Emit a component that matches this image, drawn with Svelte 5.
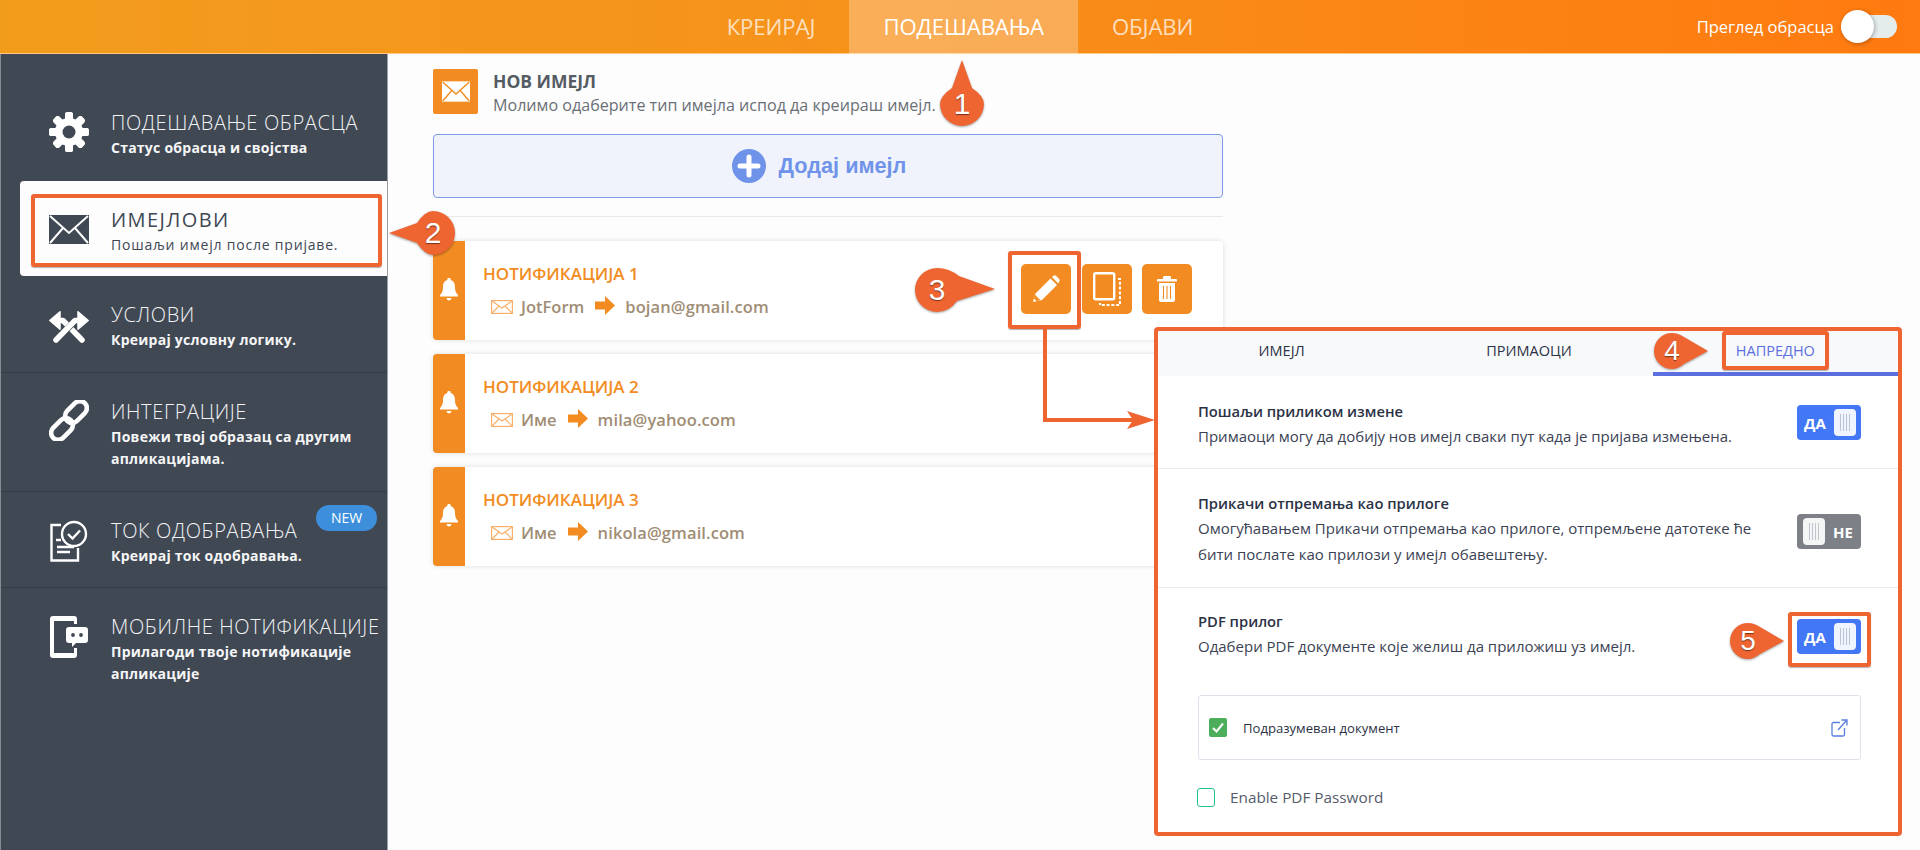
<script>
	const tabs = [
		{ label: 'КРЕИРАЈ' },
		{ label: 'ПОДЕШАВАЊА', active: true },
		{ label: 'ОБЈАВИ' }
	];

	const nav = [
		{ icon: 'gear', title: 'ПОДЕШАВАЊЕ ОБРАСЦА', sub: ['Статус обрасца и својства'], cls: 'first' },
		{ icon: 'mail', title: 'ИМЕЈЛОВИ', sub: ['Пошаљи имејл после пријаве.'], cls: 'active' },
		{ icon: 'cross', title: 'УСЛОВИ', sub: ['Креирај условну логику.'] },
		{ icon: 'link', title: 'ИНТЕГРАЦИЈЕ', sub: ['Повежи твој образац са другим', 'апликацијама.'] },
		{ icon: 'flow', title: 'ТОК ОДОБРАВАЊА', sub: ['Креирај ток одобравања.'], badge: 'NEW', cls: 'flow-item' },
		{ icon: 'phone', title: 'МОБИЛНЕ НОТИФИКАЦИЈЕ', sub: ['Прилагоди твоје нотификације', 'апликације'] }
	];

	const cards = [
		{ title: 'НОТИФИКАЦИЈА 1', from: 'JotForm', to: 'bojan@gmail.com', actions: true },
		{ title: 'НОТИФИКАЦИЈА 2', from: 'Име', to: 'mila@yahoo.com' },
		{ title: 'НОТИФИКАЦИЈА 3', from: 'Име', to: 'nikola@gmail.com' }
	];

	const gearTeeth = [0, 45, 90, 135, 180, 225, 270, 315];
</script>

{#snippet envelope(cls)}
	<svg class={cls} viewBox="0 0 40 29">
		<rect width="40" height="29" fill="currentColor" />
		<path d="M1 1 L20 18 L39 1 M1 28 L14 13 M39 28 L26 13" fill="none" stroke="var(--cut)" stroke-width="2" />
	</svg>
{/snippet}

{#snippet navIcon(name)}
	{#if name === 'gear'}
		<svg class="nav-icon gear" viewBox="0 0 40 40">
			{#each gearTeeth as a}
				<rect x="16" y="0" width="8" height="40" rx="2.5" fill="#fff" transform="rotate({a} 20 20)" />
			{/each}
			<circle cx="20" cy="20" r="14" fill="#fff" />
			<circle cx="20" cy="20" r="6.500" fill="#404854" />
		</svg>
	{:else if name === 'mail'}
		<span class="nav-icon mail">{@render envelope('mail-svg')}</span>
	{:else if name === 'cross'}
		<svg class="nav-icon cross" viewBox="0 0 40 33">
			<path d="M33 29 L14 9.500 H9" fill="none" stroke="#fff" stroke-width="5.500" stroke-linecap="round" stroke-linejoin="round" />
			<path d="M0.800 9.500 L11 0.800 V18.200 Z" fill="#fff" stroke="#fff" stroke-width="1.500" stroke-linejoin="round" />
			<path d="M12 24 L25 11" fill="none" stroke="#404854" stroke-width="6.500" />
			<path d="M7 29 L26 9.500 H31" fill="none" stroke="#fff" stroke-width="5.500" stroke-linecap="round" stroke-linejoin="round" />
			<path d="M39.200 9.500 L29 0.800 V18.200 Z" fill="#fff" stroke="#fff" stroke-width="1.500" stroke-linejoin="round" />
		</svg>
	{:else if name === 'link'}
		<svg class="nav-icon link" viewBox="0 0 40 40">
			<g fill="none" stroke="#fff" stroke-width="4.600">
				<rect x="20" y="-1" width="14" height="25" rx="7" transform="rotate(45 27 11.500)" />
				<rect x="6" y="16" width="14" height="25" rx="7" transform="rotate(45 13 28.500)" />
			</g>
		</svg>
	{:else if name === 'flow'}
		<svg class="nav-icon flow" viewBox="0 0 38 42">
			<path d="M11 5 H1.500 V40.500 H28 V28" fill="none" stroke="#fff" stroke-width="2.400" />
			<path d="M6 20 H11 M7 27 H24 M7 32 H20" stroke="#fff" stroke-width="2.400" />
			<circle cx="24" cy="14" r="12" fill="#404854" stroke="#fff" stroke-width="2.400" />
			<path d="M18 14 L22.500 18.500 L30 10.500" fill="none" stroke="#fff" stroke-width="2.400" />
		</svg>
	{:else if name === 'phone'}
		<svg class="nav-icon phone" viewBox="0 0 38 42">
			<path d="M3 0 H24 Q27 0 27 3 V8 H24 V5 H4 V37 H24 V32 H27 V39 Q27 42 24 42 H3 Q0 42 0 39 V3 Q0 0 3 0 Z" fill="#fff" />
			<path d="M19 11 H35 Q38 11 38 14 V24 Q38 27 35 27 H26 L22 31 V27 H19 Q16 27 16 24 V14 Q16 11 19 11 Z" fill="#fff" />
			<circle cx="23" cy="19" r="1.900" fill="#404854" />
			<circle cx="31" cy="19" r="1.900" fill="#404854" />
		</svg>
	{/if}
{/snippet}

{#snippet toggle(on, label)}
	<div class="toggle" class:on>
		{#if on}<b>{label}</b>{/if}
		<span class="knob"><i></i><i></i><i></i><i></i></span>
		{#if !on}<b>{label}</b>{/if}
	</div>
{/snippet}

<div class="page">
	<header class="topbar">
		<nav class="tabs">
			{#each tabs as t}
				<a class="tab" class:active={t.active} href="#top">{t.label}</a>
			{/each}
		</nav>
		<div class="preview">
			<span>Преглед обрасца</span>
			<div class="switch"><span class="switch-knob"></span></div>
		</div>
	</header>

	<div class="layout">
		<aside class="sidebar">
			{#each nav as item}
				<div class="item {item.cls ?? ''}">
					{@render navIcon(item.icon)}
					<div class="item-text">
						<div class="item-title">{item.title}</div>
						{#each item.sub as line}
							<div class="item-sub">{line}</div>
						{/each}
					</div>
					{#if item.badge}<span class="new">{item.badge}</span>{/if}
				</div>
			{/each}
		</aside>

		<main class="content">
			<div class="head">
				<div class="head-icon">{@render envelope('head-svg')}</div>
				<div>
					<div class="head-title">НОВ ИМЕЈЛ</div>
					<div class="head-sub">Молимо одаберите тип имејла испод да креираш имејл.</div>
				</div>
			</div>

			<button class="add">
				<svg class="plus" viewBox="0 0 34 34">
					<circle cx="17" cy="17" r="17" fill="#6f93e8" />
					<path d="M17 8 V26 M8 17 H26" stroke="#fff" stroke-width="5" stroke-linecap="round" />
				</svg>
				Додај имејл
			</button>

			<hr />

			{#each cards as c}
				<div class="card">
					<div class="strip">
						<svg viewBox="0 0 18 23" class="bell">
							<path d="M9 0 a1.600 1.600 0 0 1 1.600 2 C14 3 15 6 15 9 C15 13 16 15 18 17 V18.500 H0 V17 C2 15 3 13 3 9 C3 6 4 3 7.400 2 A1.600 1.600 0 0 1 9 0 Z M6.500 20 H11.500 A2.500 2.500 0 0 1 6.500 20 Z" fill="#fff" />
						</svg>
					</div>
					<div class="card-body">
						<div class="card-title">{c.title}</div>
						<div class="card-line">
							<svg class="mini" viewBox="0 0 22 14">
								<rect x=".6" y=".6" width="20.800" height="12.800" fill="#fff" stroke="#f9b06a" stroke-width="1.200" />
								<path d="M1 1 L11 8 L21 1 M1 13 L8 6 M21 13 L14 6" fill="none" stroke="#f9b06a" stroke-width="1.200" />
							</svg>
							<span>{c.from}</span>
							<svg class="arrow" viewBox="0 0 20 19">
								<path d="M0 5.500 H10 V0 L20 9.500 L10 19 V13.500 H0 Z" fill="#f28c22" />
							</svg>
							<span class="to">{c.to}</span>
						</div>
					</div>
					{#if c.actions}
						<div class="actions">
							<button class="act" aria-label="edit">
								<svg viewBox="0 0 28 28" width="28" height="28">
									<path d="M1 27 L3.500 18.500 L18.500 3.500 L25 10 L10 25 Z" fill="#fff" />
									<path d="M20 2 L22 0.500 Q23 0 24 .8 L27.200 4 Q28 5 27.500 6 L26.200 8.500 Z" fill="#fff" />
									<path d="M1 27 L3 20 L8 25 Z" fill="#f28c22" stroke="#f28c22" stroke-width=".4" />
									<path d="M1 27 L2 23.500 L4.500 26 Z" fill="#fff" />
								</svg>
							</button>
							<button class="act" aria-label="copy">
								<svg viewBox="0 0 28 34" width="28" height="34">
									<rect x="1.200" y="1.200" width="20" height="26" rx="1.500" fill="none" stroke="#fff" stroke-width="2.400" />
									<path d="M25 7 H27 V33 H7 V31" fill="none" stroke="#fff" stroke-width="2.200" stroke-dasharray="3 1.800" />
								</svg>
							</button>
							<button class="act" aria-label="delete">
								<svg viewBox="0 0 20 26" width="20" height="26">
									<path d="M7 0 H13 Q14 0 14 1.500 V3 H19 Q20 3 20 4 V5.500 H0 V4 Q0 3 1 3 H6 V1.500 Q6 0 7 0 Z" fill="#fff" />
									<path d="M2 7 H18 V24 Q18 26 16 26 H4 Q2 26 2 24 Z" fill="#fff" />
									<path d="M6.500 10 V23 M10 10 V23 M13.500 10 V23" stroke="#f28c22" stroke-width="1.100" />
								</svg>
							</button>
						</div>
					{/if}
				</div>
			{/each}
		</main>
	</div>

	<!-- callout panel that sits over the page -->
	<section class="panel">
		<div class="panel-tabs">
			<div class="ptab">ИМЕЈЛ</div>
			<div class="ptab">ПРИМАОЦИ</div>
			<div class="ptab current">НАПРЕДНО</div>
		</div>

		<div class="row row-one">
			<div>
				<h4>Пошаљи приликом измене</h4>
				<p>Примаоци могу да добију нов имејл сваки пут када је пријава измењена.</p>
			</div>
			{@render toggle(true, 'ДА')}
		</div>
		<div class="row row-two">
			<div>
				<h4>Прикачи отпремања као прилоге</h4>
				<p>Омогућавањем Прикачи отпремања као прилоге, отпремљене датотеке ће<br />бити послате као прилози у имејл обавештењу.</p>
			</div>
			{@render toggle(false, 'НЕ')}
		</div>
		<div class="row row-three">
			<div>
				<h4>PDF прилог</h4>
				<p>Одабери PDF документе које желиш да приложиш уз имејл.</p>
			</div>
			{@render toggle(true, 'ДА')}
		</div>

		<div class="doc">
			<span class="check">
				<svg viewBox="0 0 18 19" width="18" height="19"><path d="M4 10 L7.500 13.500 L14 5.500" fill="none" stroke="#fff" stroke-width="2" /></svg>
			</span>
			<span class="doc-label">Подразумеван документ</span>
			<svg class="ext" viewBox="0 0 17 18" width="17" height="18">
				<path d="M9 3.500 H2.500 Q1 3.500 1 5 V15.500 Q1 17 2.500 17 H12 Q13.500 17 13.500 15.500 V9 M7 11 L15.500 1.500 M10.500 1 H16 V6.500" fill="none" stroke="#5a7de0" stroke-width="1.300" />
			</svg>
		</div>

		<div class="pass">
			<span class="empty"></span>
			<span>Enable PDF Password</span>
		</div>
	</section>

	<!-- tutorial highlights -->
	<div class="mark m-nav"></div>
	<div class="mark m-edit"></div>
	<div class="mark m-tab"></div>
	<div class="mark m-toggle"></div>

	<svg class="wire" viewBox="0 0 120 100" width="120" height="100">
		<path d="M2 0 V92 H96" fill="none" stroke="#ee6532" stroke-width="4" />
		<path d="M84 83 L112 92 L84 101 L90 92 Z" fill="#ee6532" />
	</svg>

	<div class="pin p1">
		<svg viewBox="0 0 44 66" width="44" height="66"><path d="M22 0 L32 28 Q44 36 44 44 A22 22 0 0 1 0 44 Q0 36 12 28 Z" /></svg>
		<span>1</span>
	</div>
	<div class="pin p2">
		<svg viewBox="0 0 66 44" width="66" height="44"><path d="M0 22 L28 12 Q36 0 44 0 A22 22 0 0 1 44 44 Q36 44 28 32 Z" /></svg>
		<span>2</span>
	</div>
	<div class="pin p3">
		<svg viewBox="0 0 80 44" width="80" height="44"><path d="M80 21 L44 8 Q34 0 22 0 A22 22 0 0 0 22 44 Q34 44 42 33 Z" /></svg>
		<span>3</span>
	</div>
	<div class="pin p4">
		<svg viewBox="0 0 54 36" width="54" height="36"><path d="M54 18 L30 4 Q24 0 18 0 A18 18 0 0 0 18 36 Q24 36 30 31 Z" /></svg>
		<span>4</span>
	</div>
	<div class="pin p5">
		<svg viewBox="0 0 54 36" width="54" height="36"><path d="M54 18 L30 4 Q24 0 18 0 A18 18 0 0 0 18 36 Q24 36 30 31 Z" /></svg>
		<span>5</span>
	</div>
</div>

<style>
	:global(body) {
		margin: 0;
		background: #fdfdfd;
		overflow: hidden;
	}

	.page {
		position: relative;
		width: 1920px;
		height: 850px;
		overflow: hidden;
		font-family: 'Open Sans', sans-serif;
		display: flex;
		flex-direction: column;
	}

	.topbar {
		position: relative;
		height: 54px;
		flex: none;
		background: linear-gradient(90deg, #f29c1c 0%, #f6931b 40%, #ff7a10 100%);
		display: flex;
		justify-content: center;
		box-shadow: inset 0 -1px 0 #ffc98a;
	}

	.tabs {
		display: flex;
	}

	.tab {
		padding: 0 34px;
		line-height: 54px;
		font-size: 22.200px;
		letter-spacing: -0.1px;
		color: rgba(255, 255, 255, 0.72);
		text-decoration: none;
	}

	.tab.active {
		background: rgba(255, 255, 255, 0.27);
		color: #fff;
	}

	.preview {
		position: absolute;
		right: 23px;
		top: 10px;
		display: flex;
		align-items: center;
		gap: 7px;
		height: 33px;
		color: #fff;
		font-size: 16.500px;
	}

	.switch {
		position: relative;
		width: 56px;
		height: 23px;
		border-radius: 12px;
		background: #e5ecec;
	}

	.switch-knob {
		position: absolute;
		left: 0;
		top: -5px;
		width: 33px;
		height: 33px;
		border-radius: 50%;
		background: #fff;
		box-shadow: 1px 1px 4px rgba(0, 0, 0, 0.3);
	}

	.layout {
		flex: 1;
		display: flex;
		min-height: 0;
	}

	.sidebar {
		width: 388px;
		flex: none;
		background: #404854;
		border-left: 1px solid #868b93;
		border-right: 1px solid #9a9ea5;
		box-sizing: border-box;
	}

	.item {
		position: relative;
		display: flex;
		padding: 25px 0 21px 48px;
		gap: 22px;
		color: #fff;
		border-bottom: 1px solid #343b46;
	}

	.item:last-child {
		border-bottom: 0;
	}

	.item.flow-item {
		padding-bottom: 20px;
	}

	.item.first {
		height: 127px;
		box-sizing: border-box;
		padding-top: 55px;
		border-bottom: 0;
	}

	.item.active {
		background: #fdfdfd;
		color: #404854;
		margin-left: 19px;
		padding-left: 29px;
		height: 95px;
		box-sizing: border-box;
		border-radius: 4px 0 0 4px;
		border-bottom: 0;
	}

	.nav-icon {
		width: 40px;
		flex: none;
		display: block;
	}

	.gear {
		height: 40px;
		margin-top: 3px;
	}

	.mail {
		color: #404854;
		--cut: #fdfdfd;
		height: 29px;
		margin-top: 9px;
	}

	.mail-svg {
		display: block;
		width: 40px;
		height: 29px;
	}

	.cross {
		height: 33px;
		margin-top: 10px;
	}

	.link {
		height: 41px;
		margin-top: 2px;
	}

	.flow {
		height: 42px;
		margin-top: 3px;
	}

	.phone {
		height: 42px;
		margin-top: 3px;
	}

	.item-title {
		font-size: 20px;
		line-height: 28px;
		font-weight: 300;
		letter-spacing: 0.65px;
		white-space: nowrap;
		color: #f2f3f4;
	}

	.active .item-title {
		font-weight: 400;
		letter-spacing: 1.400px;
		color: #404854;
	}

	.item-sub {
		font-size: 14px;
		line-height: 22px;
		font-weight: 700;
		letter-spacing: 0.25px;
		white-space: nowrap;
		color: #f6f6f7;
	}

	.active .item-sub {
		font-weight: 400;
		letter-spacing: 0.8px;
		color: #404854;
	}

	.new {
		position: absolute;
		right: 10px;
		top: 13px;
		width: 61px;
		height: 26px;
		border-radius: 13px;
		background: #3d8fdb;
		color: #fff;
		font-size: 14px;
		line-height: 26px;
		text-align: center;
	}

	.content {
		flex: none;
		width: 790px;
		margin-left: 45px;
		padding-top: 15px;
	}

	.head {
		display: flex;
		gap: 15px;
		height: 50px;
	}

	.head-icon {
		width: 45px;
		height: 45px;
		flex: none;
		background: #f28c22;
		border-radius: 2px;
		color: #fff;
		--cut: #f28c22;
		display: flex;
		align-items: center;
		justify-content: center;
	}

	.head-svg {
		width: 28px;
		height: 21px;
		display: block;
	}

	.head-title {
		font-size: 17.500px;
		font-weight: 700;
		line-height: 22px;
		color: #555b63;
		margin-top: 1px;
	}

	.head-sub {
		font-size: 16.100px;
		line-height: 26px;
		color: #6a6f76;
		white-space: nowrap;
	}

	.add {
		display: flex;
		align-items: center;
		justify-content: center;
		gap: 13px;
		width: 100%;
		height: 64px;
		background: #f0f3fc;
		border: 1px solid #7c9be8;
		border-radius: 4px;
		color: #6f93e8;
		font-family: 'Liberation Sans', sans-serif;
		font-size: 21.700px;
		font-weight: 700;
		padding: 0 18px 0 0;
		margin-top: 15px;
	}

	.plus {
		width: 34px;
		height: 34px;
	}

	hr {
		border: 0;
		border-top: 1px solid #e9e9e9;
		margin: 18px 0 24px;
	}

	.card {
		display: flex;
		height: 99px;
		margin-bottom: 14px;
		background: #fff;
		border-radius: 4px;
		box-shadow: 0 0 5px rgba(0, 0, 0, 0.13);
		overflow: hidden;
	}

	.strip {
		width: 32px;
		flex: none;
		background: #f28c22;
		display: flex;
		align-items: center;
		justify-content: center;
	}

	.bell {
		width: 18px;
		height: 23px;
		margin-bottom: 2px;
	}

	.card-body {
		flex: 1;
		padding: 21px 0 0 18px;
	}

	.card-title {
		font-size: 17px;
		font-weight: 600;
		line-height: 24px;
		color: #f28c22;
	}

	.card-line {
		display: flex;
		align-items: center;
		gap: 8px;
		margin: 9px 0 0 8px;
		font-size: 16.500px;
		font-weight: 600;
		line-height: 24px;
		color: #a08d75;
	}

	.to {
		letter-spacing: 0.1px;
	}

	.mini {
		width: 22px;
		height: 14px;
	}

	.arrow {
		width: 20px;
		height: 19px;
		margin: 0 2px 3px 3px;
	}

	.actions {
		display: flex;
		gap: 10.500px;
		padding: 23px 31px 0 0;
	}

	.act {
		width: 50px;
		height: 50px;
		border: 0;
		border-radius: 5px;
		background: #f28c22;
		padding: 0;
		display: flex;
		align-items: center;
		justify-content: center;
	}

	.panel {
		position: absolute;
		left: 1154px;
		top: 327px;
		width: 748px;
		height: 509px;
		box-sizing: border-box;
		border: 4px solid #ee6532;
		border-radius: 4px;
		background: #fff;
		font-family: 'Open Sans', sans-serif;
		color: #2b3245;
	}

	.panel-tabs {
		display: flex;
		height: 45px;
		background: #f8f9fb;
	}

	.ptab {
		width: 248px;
		text-align: center;
		font-size: 14.500px;
		line-height: 40px;
		color: #2b3245;
	}

	.ptab.current {
		margin-left: auto;
		width: 246px;
		border-bottom: 4px solid #5c6fe0;
		color: #5c6fe0;
		box-sizing: border-box;
	}

	.row {
		display: flex;
		justify-content: space-between;
		padding: 0 37px 0 40px;
		border-bottom: 1px solid #e9eaf1;
	}

	.row-one {
		height: 93px;
		padding-top: 23px;
		box-sizing: border-box;
	}

	.row-two {
		height: 119px;
		padding-top: 22px;
		box-sizing: border-box;
	}

	.row-three {
		height: 107px;
		padding-top: 21px;
		box-sizing: border-box;
		border-bottom: 0;
	}

	h4 {
		margin: 0;
		font-size: 14.750px;
		font-weight: 600;
		line-height: 24px;
		color: #2b3245;
	}

	.row p {
		margin: 0;
		font-size: 15px;
		line-height: 26px;
		color: #3b4254;
		white-space: nowrap;
	}

	.toggle {
		width: 64px;
		height: 35px;
		flex: none;
		box-sizing: border-box;
		border-radius: 4px;
		background: #7d8087;
		display: flex;
		align-items: center;
		justify-content: space-between;
		padding: 0 8px 0 6px;
		color: #fff;
		font-size: 15px;
		margin-top: 6px;
	}

	.toggle.on {
		background: #4277f6;
		padding: 0 5px 0 7px;
	}

	.toggle b {
		font-weight: 700;
	}

	.knob {
		width: 22px;
		height: 27px;
		background: #fff;
		border-radius: 4px;
		display: flex;
		justify-content: center;
		align-items: center;
		gap: 2px;
		opacity: 0.92;
	}

	.knob i {
		width: 1px;
		height: 17px;
		background: #c7cad3;
	}

	.row-two .toggle {
		margin-top: 23px;
	}

	.row-three .toggle {
		margin-top: 10px;
	}

	.doc {
		display: flex;
		align-items: center;
		margin: 0 37px 0 40px;
		height: 65px;
		box-sizing: border-box;
		border: 1px solid #dfe0ea;
		border-radius: 3px;
		padding: 0 12px 0 10px;
		font-size: 13.100px;
		color: #2b3245;
	}

	.check {
		width: 18px;
		height: 19px;
		border-radius: 2px;
		background: #4cae5b;
		display: block;
	}

	.check svg {
		display: block;
	}

	.doc-label {
		margin-left: 16px;
	}

	.ext {
		margin-left: auto;
	}

	.pass {
		display: flex;
		align-items: center;
		gap: 15px;
		margin: 27px 0 0 39px;
		font-size: 15.300px;
		color: #565c6b;
	}

	.empty {
		width: 18px;
		height: 19px;
		border: 1.500px solid #1fc48a;
		border-radius: 3px;
		box-sizing: border-box;
	}

	.mark {
		position: absolute;
		box-sizing: border-box;
		border: 4px solid #ee6532;
		border-radius: 3px;
		box-shadow: 0 1px 1px rgba(0, 0, 0, 0.3);
	}

	.m-nav {
		left: 31px;
		top: 194px;
		width: 351px;
		height: 73px;
	}

	.m-edit {
		left: 1008px;
		top: 251px;
		width: 73px;
		height: 78px;
	}

	.m-tab {
		left: 1722px;
		top: 331px;
		width: 107px;
		height: 39px;
	}

	.m-toggle {
		left: 1788px;
		top: 612px;
		width: 83px;
		height: 55px;
	}

	.wire {
		position: absolute;
		left: 1043px;
		top: 328px;
		overflow: visible;
	}

	.pin {
		position: absolute;
		display: flex;
		font-family: 'Liberation Sans', sans-serif;
		color: #fff;
		text-shadow: 0 1px 1px rgba(0, 0, 0, 0.5);
	}

	.pin svg {
		display: block;
		fill: #ee6532;
		filter: drop-shadow(0 1px 1px rgba(0, 0, 0, 0.35));
		overflow: visible;
	}

	.pin span {
		position: absolute;
		font-size: 30px;
		line-height: 44px;
		width: 44px;
		text-align: center;
	}

	.p1 {
		left: 940px;
		top: 60px;
	}

	.p1 span {
		left: 0;
		top: 22px;
	}

	.p2 {
		left: 389px;
		top: 211px;
	}

	.p2 span {
		left: 22px;
		top: 0;
	}

	.p3 {
		left: 915px;
		top: 268px;
	}

	.p3 span {
		left: 0;
		top: 0;
	}

	.p4 {
		left: 1654px;
		top: 333px;
	}

	.p4 span {
		left: -4px;
		top: -4px;
		font-size: 28px;
	}

	.p5 {
		left: 1730px;
		top: 623px;
	}

	.p5 span {
		left: -4px;
		top: -4px;
		font-size: 28px;
	}
</style>
